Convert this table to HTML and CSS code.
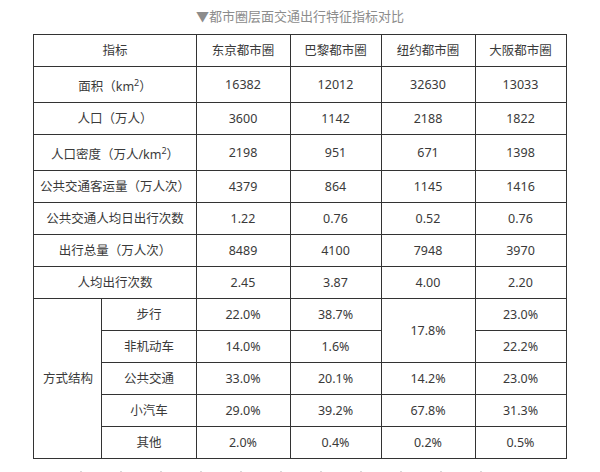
FILE: index.html
```html
<!DOCTYPE html>
<html lang="zh">
<head>
<meta charset="utf-8">
<link rel="stylesheet" href="styles.css">
</head>
<body>
<div class="page">
  <p class="caption">▼都市圈层面交通出行特征指标对比</p>
  <table class="data">
    <colgroup>
      <col class="c-a"><col class="c-b"><col class="c-w"><col class="c-n"><col class="c-w"><col class="c-n">
    </colgroup>
    <tr><td colspan="2">指标</td><td>东京都市圈</td><td>巴黎都市圈</td><td>纽约都市圈</td><td>大阪都市圈</td></tr>
    <tr><td colspan="2">面积（km<sup>2</sup>）</td><td>16382</td><td>12012</td><td>32630</td><td>13033</td></tr>
    <tr><td colspan="2">人口（万人）</td><td>3600</td><td>1142</td><td>2188</td><td>1822</td></tr>
    <tr><td colspan="2">人口密度（万人/km<sup>2</sup>）</td><td>2198</td><td>951</td><td>671</td><td>1398</td></tr>
    <tr><td colspan="2">公共交通客运量（万人次）</td><td>4379</td><td>864</td><td>1145</td><td>1416</td></tr>
    <tr><td colspan="2">公共交通人均日出行次数</td><td>1.22</td><td>0.76</td><td>0.52</td><td>0.76</td></tr>
    <tr><td colspan="2">出行总量（万人次）</td><td>8489</td><td>4100</td><td>7948</td><td>3970</td></tr>
    <tr><td colspan="2">人均出行次数</td><td>2.45</td><td>3.87</td><td>4.00</td><td>2.20</td></tr>
    <tr><td rowspan="5">方式结构</td><td>步行</td><td>22.0%</td><td>38.7%</td><td rowspan="2">17.8%</td><td>23.0%</td></tr>
    <tr><td>非机动车</td><td>14.0%</td><td>1.6%</td><td>22.2%</td></tr>
    <tr><td>公共交通</td><td>33.0%</td><td>20.1%</td><td>14.2%</td><td>23.0%</td></tr>
    <tr><td>小汽车</td><td>29.0%</td><td>39.2%</td><td>67.8%</td><td>31.3%</td></tr>
    <tr><td>其他</td><td>2.0%</td><td>0.4%</td><td>0.2%</td><td>0.5%</td></tr>
  </table>
  <div class="dots"></div>
</div>
</body>
</html>
```

FILE: styles.css
```css
html, body {
  margin: 0;
  padding: 0;
  background: #fff;
}
.page {
  width: 600px;
  height: 472px;
  overflow: hidden;
  font-family: "Noto Sans", "Noto Sans CJK SC", sans-serif;
  color: #3a3a3a;
}
.caption {
  margin: 0 0 8px;
  padding-top: 6px;
  font-size: 13px;
  line-height: 20px;
  color: #8c8c8c;
  text-align: center;
}
.data {
  margin: 0 auto;
  width: 533px;
  table-layout: fixed;
  border-collapse: collapse;
  border: 1px solid #333;
  font-size: 12.5px;
}
.c-a { width: 68px; }
.c-b { width: 94px; }
.c-w { width: 94px; }
.c-n { width: 91px; }
.data td {
  border: 1px solid #333;
  padding: 6px 2px;
  line-height: 19px;
  text-align: center;
  white-space: nowrap;
}
.data sup {
  font-size: 9px;
}
.dots {
  margin: 12px auto 0;
  width: 440px;
  height: 2px;
  background: repeating-linear-gradient(90deg, #d8d8d8 0 2px, transparent 2px 40px);
}
```
